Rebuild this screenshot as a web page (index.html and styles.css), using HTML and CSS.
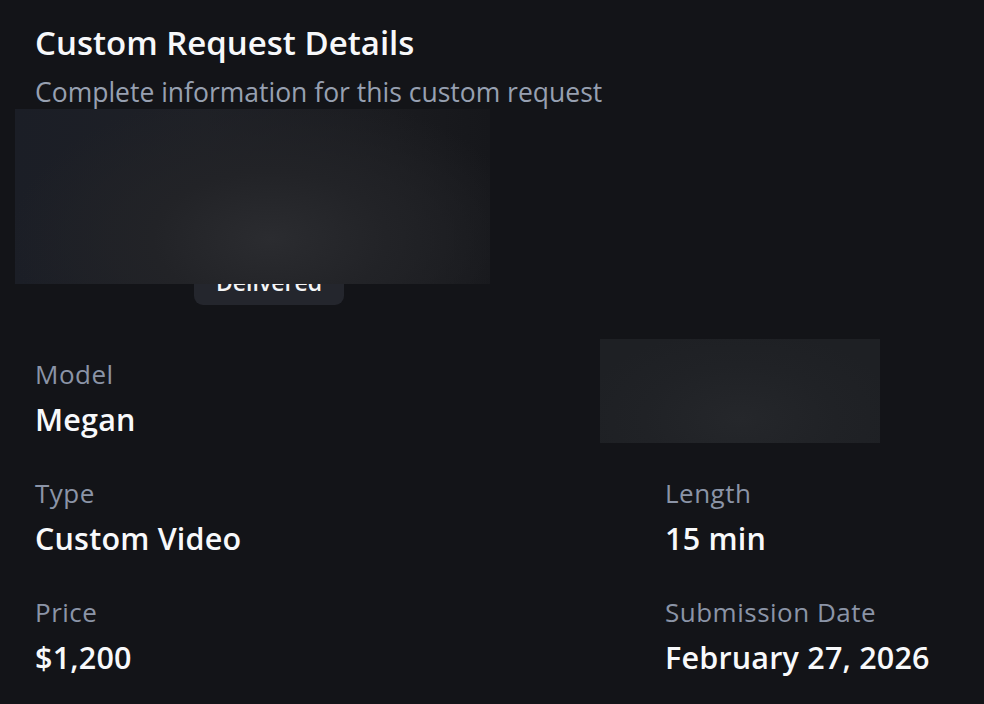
FILE: index.html
```html
<!DOCTYPE html>
<html lang="en">
<head>
<meta charset="utf-8">
<title>Custom Request Details</title>
<link rel="stylesheet" href="styles.css">
</head>
<body>
<main class="page">
  <header class="head">
    <h1 class="title">Custom Request Details</h1>
    <p class="subtitle">Complete information for this custom request</p>
  </header>
  <section class="media">
    <div class="media-cover"></div>
    <span class="badge">Delivered</span>
  </section>
  <section class="grid">
    <div class="field">
      <div class="label">Model</div>
      <div class="value">Megan</div>
    </div>
    <div class="field field-redacted">
      <div class="redact"></div>
    </div>
    <div class="field">
      <div class="label">Type</div>
      <div class="value">Custom Video</div>
    </div>
    <div class="field">
      <div class="label">Length</div>
      <div class="value">15 min</div>
    </div>
    <div class="field">
      <div class="label">Price</div>
      <div class="value">$1,200</div>
    </div>
    <div class="field">
      <div class="label">Submission Date</div>
      <div class="value">February 27, 2026</div>
    </div>
  </section>
</main>
</body>
</html>
```
FILE: styles.css
```css
* { box-sizing: border-box; }
html, body { margin: 0; height: 100%; }
body {
  background: #131418;
  font-family: "Open Sans", Roboto, sans-serif;
  color: #f6f7f9;
  overflow: hidden;
}
.page {
  padding: 23px 35px 0 35px;
}
.title {
  margin: 0;
  font-size: 33px;
  line-height: 40px;
  font-weight: 600;
  color: #f7f8fa;
}
.subtitle {
  margin: 12px 0 0 0;
  font-size: 26.5px;
  line-height: 34px;
  font-weight: 400;
  color: #97a0b1;
}
.media {
  position: relative;
  display: flex;
  flex-direction: column;
  align-items: flex-start;
  margin-left: -20px;
}
.media-cover {
  position: relative;
  z-index: 2;
  width: 475px;
  height: 175px;
  background:
    radial-gradient(ellipse 260px 150px at 255px 130px, #2b2c30 0%, #222327 45%, rgba(26,27,31,0) 100%),
    linear-gradient(90deg, #1b1e26 0%, #1e2026 40%, #1a1b1f 80%, #16171b 100%);
}
.badge {
  position: relative;
  z-index: 1;
  margin: -22px 0 0 179px;
  padding: 6px 22px 8px 22px;
  background: #24262d;
  border-radius: 9px;
  font-size: 23px;
  line-height: 29px;
  font-weight: 600;
  color: #f4f5f7;
}
.grid {
  display: grid;
  grid-template-columns: 630px 1fr;
  row-gap: 40px;
  margin-top: 53px;
}
.field {
  display: flex;
  flex-direction: column;
  gap: 11px;
}
.field-redacted {
  position: relative;
}
.redact {
  position: absolute;
  left: -65px;
  top: -19px;
  width: 280px;
  height: 104px;
  background:
    radial-gradient(ellipse 160px 90px at 140px 80px, #25272b 0%, #202226 60%, #1e2024 100%);
}
.label {
  font-size: 26px;
  line-height: 32px;
  letter-spacing: 0.5px;
  color: #8b94a7;
}
.value {
  font-size: 30.5px;
  line-height: 36px;
  font-weight: 600;
  letter-spacing: 0.2px;
  color: #f8f9fb;
}
```
